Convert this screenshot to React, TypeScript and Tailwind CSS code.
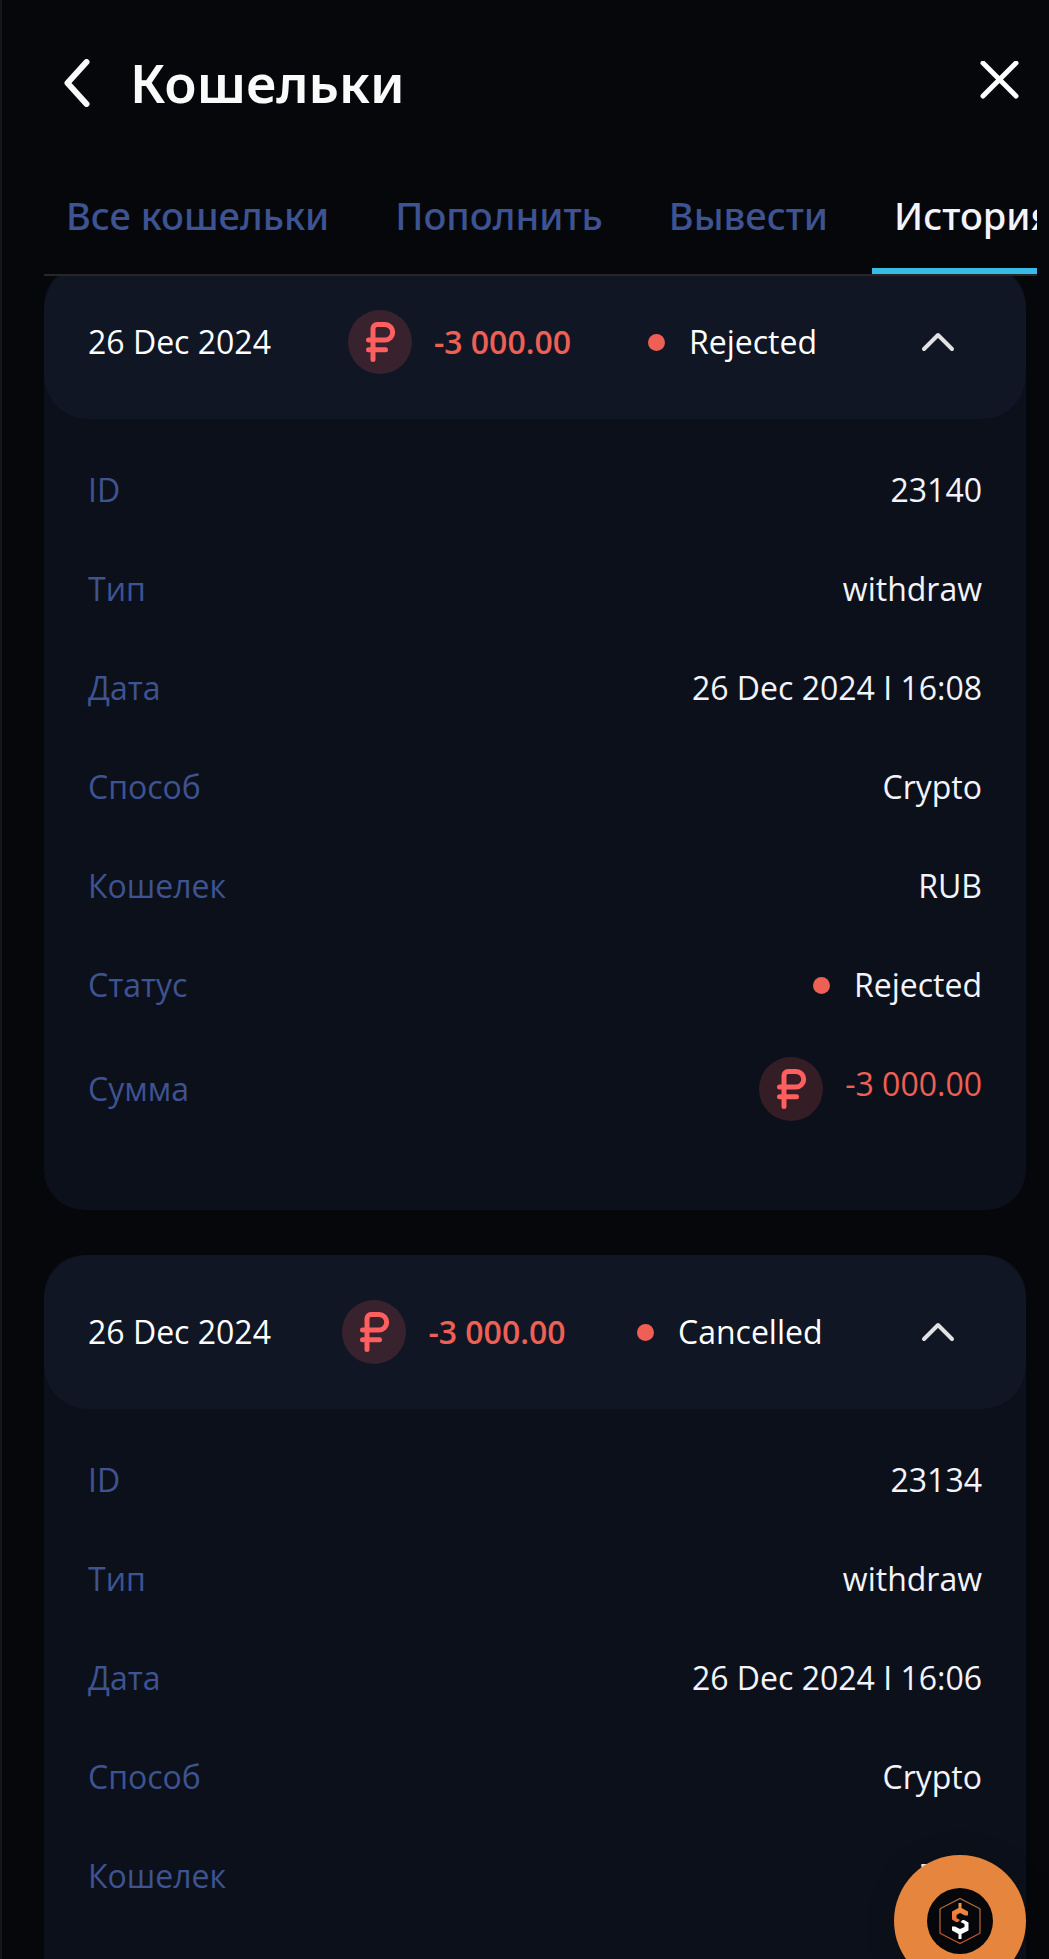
import { useState } from 'react'

type Transaction = {
    id: string
    type: string
    date: string
    time: string
    method: string
    wallet: string
    status: string
    amount: string
}

const tabs = ['Все кошельки', 'Пополнить', 'Вывести', 'История']

const transactions: Transaction[] = [
    { id: '23140', type: 'withdraw', date: '26 Dec 2024', time: '16:08', method: 'Crypto', wallet: 'RUB', status: 'Rejected', amount: '-3 000.00' },
    { id: '23134', type: 'withdraw', date: '26 Dec 2024', time: '16:06', method: 'Crypto', wallet: 'RUB', status: 'Cancelled', amount: '-3 000.00' },
]

const RubleIcon = () => (
    <svg className="size-16 shrink-0" viewBox="0 0 64 64" fill="none" aria-hidden="true">
        <circle cx="32" cy="32" r="32" fill="#ff5f5f" fillOpacity="0.17" />
        <path
            d="M25 49.500V18.500a4 4 0 0 1 4-4H37a7.700 7.700 0 0 1 0 15.400H20.500M20.500 39.700H37.500"
            stroke="#ff5f5f"
            strokeWidth="5"
            strokeLinecap="round"
            strokeLinejoin="round"
        />
    </svg>
)

const Status = ({ value }: { value: string }) => (
    <span className="flex items-center gap-6">
        <span className="size-[17px] rounded-full bg-[#ee6055]" />
        {value}
    </span>
)

const Row = ({ label, children }: { label: string; children: React.ReactNode }) => (
    <div className="flex items-center justify-between">
        <dt className="text-[#3e5391]">{label}</dt>
        <dd className="flex text-[#f3f4fb]">{children}</dd>
    </div>
)

const TransactionCard = ({ tx }: { tx: Transaction }) => {
    const [open, setOpen] = useState(true)

    return (
        <article className="rounded-[40px] bg-[#0c101a] text-[32px] leading-[54px]">
            <button
                type="button"
                aria-expanded={open}
                onClick={() => setOpen(!open)}
                className="flex w-full items-center justify-between rounded-[44px] bg-[#101624] px-11 py-[45px] text-white"
            >
                <span>{tx.date}</span>
                <span className="flex items-center gap-[22px] font-semibold text-[#ee6055]">
                    <RubleIcon />
                    {tx.amount}
                </span>
                <Status value={tx.status} />
                <span className="flex w-[88px] justify-center">
                    <svg className={open ? 'h-5 w-[34px]' : 'h-5 w-[34px] rotate-180'} viewBox="0 0 34 20" fill="none" aria-hidden="true">
                        <path d="M3 17L17 3L31 17" stroke="#e2e2e4" strokeWidth="4" strokeLinecap="round" strokeLinejoin="round" />
                    </svg>
                </span>
            </button>

            {open && (
                <dl className="flex flex-col gap-[45px] px-11 pt-11 pb-[89px]">
                    <Row label="ID">{tx.id}</Row>
                    <Row label="Тип">{tx.type}</Row>
                    <Row label="Дата">{tx.date} I {tx.time}</Row>
                    <Row label="Способ">{tx.method}</Row>
                    <Row label="Кошелек">{tx.wallet}</Row>
                    <Row label="Статус"><Status value={tx.status} /></Row>
                    <Row label="Сумма">
                        <span className="flex items-start gap-[22px] text-[#ee6055]">
                            <RubleIcon />
                            {tx.amount}
                        </span>
                    </Row>
                </dl>
            )}
        </article>
    )
}

const ChatButton = () => (
    <button
        type="button"
        aria-label="Чат"
        className="fixed right-[23px] -bottom-7 flex size-[132px] items-center justify-center rounded-full bg-[#e6863e] shadow-[0_4px_32px_rgba(0,0,0,0.15)]"
    >
        <svg className="size-[66px]" viewBox="0 0 66 66" fill="none" aria-hidden="true">
            <defs>
                <linearGradient id="edge" x1="0" y1="0" x2="0" y2="1">
                    <stop offset="0" stopColor="#b0763c" />
                    <stop offset="0.5" stopColor="#a85a30" />
                    <stop offset="1" stopColor="#d0582c" />
                </linearGradient>
                <linearGradient id="hook" x1="0" y1="0" x2="0" y2="1">
                    <stop offset="0" stopColor="#f09a48" />
                    <stop offset="1" stopColor="#ee6a34" />
                </linearGradient>
            </defs>
            <circle cx="33" cy="33" r="33" fill="#06070b" />
            <path d="M33 10.500L52.500 20.500Q53 21 53 22V44Q53 45 52.500 45.500L33 55.500L13.500 45.500Q13 45 13 44V22Q13 21 13.500 20.500Z" stroke="url(#edge)" strokeWidth="1.300" strokeLinejoin="round" />
            <path d="M31.500 15H34.500V20L41 23.500V27.500H38L33 25L29.500 27V30L33 32L31 34H29L25 31.500V23.500L31.500 20Z" fill="url(#hook)" />
            <path d="M34.500 51H31.500V46L25 42.500V38.500H28L33 41L37.500 39V36L33.500 34L35.500 32H37L41.500 34.500V42.500L34.500 46Z" fill="#fff" />
        </svg>
    </button>
)

const App = () => {
    const [active, setActive] = useState('История')

    return (
        <div className="flex h-screen flex-col overflow-hidden border-l-2 border-[#15161a] bg-[#06070b] pl-[42px] font-['Open_Sans','Noto_Sans',sans-serif]">
            <header className="flex h-[122px] items-center pt-11 pr-7 pl-5">
                <button type="button" aria-label="Назад" className="flex w-[26px] justify-center">
                    <svg className="h-12 w-[26px]" viewBox="0 0 26 48" fill="none" aria-hidden="true">
                        <path d="M22.500 3L3.500 24L22.500 45" stroke="#fafafa" strokeWidth="6" strokeLinecap="round" strokeLinejoin="round" />
                    </svg>
                </button>
                <h1 className="ml-10 font-['Noto_Sans',sans-serif] text-[53px] leading-[80px] font-semibold text-[#fafafa]">Кошельки</h1>
                <button type="button" aria-label="Закрыть" className="ml-auto">
                    <svg className="size-11" viewBox="0 0 44 44" fill="none" aria-hidden="true">
                        <path d="M6 2L39 35M39 2L6 35" stroke="#fff" strokeWidth="5" strokeLinecap="round" />
                    </svg>
                </button>
            </header>

            <nav className="mt-[46px] mr-3 flex shrink-0 gap-[22px] overflow-hidden border-b-2 border-[#27272a] font-['Noto_Sans',sans-serif]">
                {tabs.map((tab) => (
                    <button
                        key={tab}
                        type="button"
                        onClick={() => setActive(tab)}
                        className={
                            tab === active
                                ? 'shrink-0 border-b-6 border-[#38bbe6] px-[22px] pt-2.5 pb-4 text-[38px] leading-[74px] font-medium text-[#f3f4fb]'
                                : 'shrink-0 border-b-6 border-transparent px-[22px] pt-2.5 pb-4 text-[38px] leading-[74px] font-medium text-[#3e5391]'
                        }
                    >
                        {tab}
                    </button>
                ))}
            </nav>

            <main className="min-h-0 flex-1 overflow-hidden pr-[23px]">
                <div className="-mt-[11px] flex flex-col gap-[45px]">
                    {transactions.map((tx) => (
                        <TransactionCard key={tx.id} tx={tx} />
                    ))}
                </div>
            </main>

            <ChatButton />
        </div>
    )
}
export default App
